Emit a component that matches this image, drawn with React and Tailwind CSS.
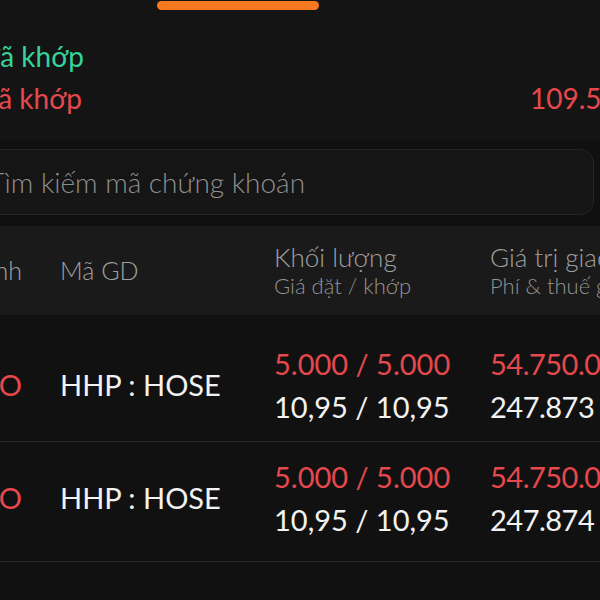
import React from 'react';

const rows = [
  { side: 'LO', code: 'HHP : HOSE', qty: '5.000 / 5.000', price: '10,95 / 10,95', value: '54.750.000', fee: '247.873', pad: 'pt-[27px] h-[127px]' },
  { side: 'LO', code: 'HHP : HOSE', qty: '5.000 / 5.000', price: '10,95 / 10,95', value: '54.750.000', fee: '247.874', pad: 'pt-[13px] h-[120px]' },
];

const App = () => {
  return (
    <div className="w-[600px] h-[600px] overflow-hidden bg-[#111111] font-['Lato',sans-serif] whitespace-nowrap">
      {/* summary */}
      <div className="bg-[#141414] h-[140px] pt-px">
        <div className="ml-[157px] w-[162px] h-[9px] rounded-full bg-[#f47920]"></div>
        <div className="mt-[29px] flex w-[84px] justify-end text-[28px] leading-[34px] text-[#35d39a]">
          Giá trị mua đã khớp
        </div>
        <div className="mt-[8px] flex items-center justify-between text-[28px] leading-[34px] text-[#e5484d]">
          <div className="flex w-[82px] shrink-0 justify-end">Giá trị bán đã khớp</div>
          <div className="w-[70px] shrink-0">109.500.000</div>
        </div>
      </div>

      {/* search */}
      <div className="bg-[#101010] pt-[9px] pb-[11px] pr-[6px]">
        <div className="-ml-[20px] h-[66px] rounded-[14px] border border-[#262626] bg-[#151515] flex items-center pl-[7px] text-[28px] font-light text-[#8f8f8f]">
          Tìm kiếm mã chứng khoán
        </div>
      </div>

      {/* table header */}
      <div className="bg-[#1a1a1a] h-[89px] flex items-center font-light text-[#a0a0a0]">
        <div className="w-[22px] shrink-0 flex justify-end text-[25px]">Lệnh</div>
        <div className="ml-[38px] w-[214px] shrink-0 text-[25px]">Mã GD</div>
        <div className="w-[216px] shrink-0 flex flex-col">
          <span className="text-[26px] leading-[30px]">Khối lượng</span>
          <span className="text-[22px] leading-[28px] text-[#939393]">Giá đặt / khớp</span>
        </div>
        <div className="shrink-0 flex flex-col">
          <span className="text-[26px] leading-[30px]">Giá trị giao dịch</span>
          <span className="text-[22px] leading-[28px] text-[#939393]">Phí & thuế giao dịch</span>
        </div>
      </div>

      {/* rows */}
      {rows.map((r, i) => (
        <div key={i} className={`${r.pad} flex border-b border-[#262626] text-[29px]`}>
          <div className="w-[22px] shrink-0 flex justify-end items-center h-[86px] text-[#e5484d]">{r.side}</div>
          <div className="ml-[38px] w-[214px] shrink-0 flex items-center h-[86px] text-[#f2f2f2]">{r.code}</div>
          <div className="w-[216px] shrink-0 flex flex-col leading-[43px]">
            <span className="text-[#e5484d]">{r.qty}</span>
            <span className="text-[#f2f2f2]">{r.price}</span>
          </div>
          <div className="shrink-0 flex flex-col leading-[43px] tracking-[-0.5px]">
            <span className="text-[#e5484d]">{r.value}</span>
            <span className="text-[#f2f2f2]">{r.fee}</span>
          </div>
        </div>
      ))}
    </div>
  );
};

export default App;
